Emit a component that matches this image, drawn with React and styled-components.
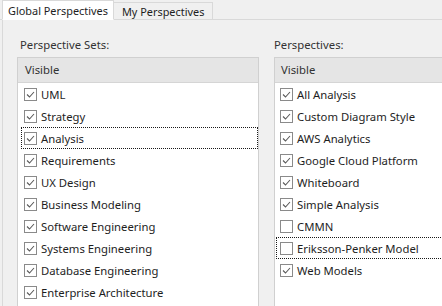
import React from "react";
import styled, { createGlobalStyle } from "styled-components";

const GlobalStyle = createGlobalStyle`
  html, body {
    margin: 0;
    padding: 0;
    background: #f0f0f0;
  }
  body {
    font-family: "Noto Sans", "Open Sans", sans-serif;
    font-size: 11.3px;
    color: #1e1e1e;
  }
`;

const Window = styled.div`
  width: 442px;
  height: 306px;
  overflow: hidden;
  display: flex;
  flex-direction: column;
  background: #f0f0f0;
`;

const TabStrip = styled.div`
  display: flex;
  align-items: flex-end;
  height: 20px;
  padding-left: 2px;
  border-bottom: 1px solid #d9d9d9;
  box-sizing: border-box;
`;

const Tab = styled.div`
  box-sizing: border-box;
  display: flex;
  align-items: center;
  white-space: nowrap;
  font-size: 10.9px;
  height: ${(p) => (p.$active ? "20px" : "17px")};
  background: ${(p) => (p.$active ? "#ffffff" : "#f0f0f0")};
  border: 1px solid #d9d9d9;
  border-bottom: ${(p) => (p.$active ? "1px solid #ffffff" : "none")};
  border-left: ${(p) => (p.$active ? "1px solid #d9d9d9" : "none")};
  margin-bottom: ${(p) => (p.$active ? "-1px" : "0")};
  padding: 0 ${(p) => (p.$active ? "5px" : "8px")} 0 ${(p) => (p.$active ? "5px" : "8px")};
`;

const Pane = styled.div`
  flex: 1;
  margin-left: 2px;
  border-left: 1px solid #d9d9d9;
  display: grid;
  grid-template-columns: 242px 242px;
  column-gap: 15px;
  padding: 17px 0 0 14px;
  min-height: 0;
`;

const Column = styled.div`
  display: flex;
  flex-direction: column;
  gap: 4px;
  min-height: 0;
`;

const Label = styled.div`
  height: 16px;
  line-height: 16px;
  padding-left: ${(p) => p.$indent ?? 3}px;
  color: #333;
`;

const ListBox = styled.div`
  flex: 1;
  background: #ffffff;
  border: 1px solid #d0d0d0;
  border-bottom: none;
`;

const Header = styled.div`
  height: 24px;
  line-height: 24px;
  background: #e5e5e5;
  border-bottom: 1px solid #d5d5d5;
  padding-left: ${(p) => p.$indent}px;
  color: #333;
`;

const Row = styled.div`
  box-sizing: border-box;
  display: flex;
  align-items: center;
  gap: 4px;
  height: 22px;
  margin-left: ${(p) => p.$inset}px;
  padding-left: ${(p) => p.$pad}px;
  border: 1px dotted ${(p) => (p.$focus ? "#1a1a1a" : "transparent")};
  white-space: nowrap;
`;

const Box = styled.span`
  box-sizing: border-box;
  width: 13px;
  height: 13px;
  border: 1px solid #8a8a8a;
  background: #fff;
  flex: none;
  display: flex;
  align-items: center;
  justify-content: center;
`;

const Check = ({ on }) => (
  <Box>
    {on && (
      <svg width="11" height="11" viewBox="0 0 11 11">
        <path d="M2 5.5 L4.5 8 L9 3" fill="none" stroke="#5a5a5a" strokeWidth="1.1" />
      </svg>
    )}
  </Box>
);

const sets = [
  "UML",
  "Strategy",
  "Analysis",
  "Requirements",
  "UX Design",
  "Business Modeling",
  "Software Engineering",
  "Systems Engineering",
  "Database Engineering",
  "Enterprise Architecture",
];

const perspectives = [
  ["All Analysis", true],
  ["Custom Diagram Style", true],
  ["AWS Analytics", true],
  ["Google Cloud Platform", true],
  ["Whiteboard", true],
  ["Simple Analysis", true],
  ["CMMN", false],
  ["Eriksson-Penker Model", false],
  ["Web Models", true],
];

export default function App() {
  return (
    <>
      <GlobalStyle />
      <Window>
        <TabStrip>
          <Tab $active>Global Perspectives</Tab>
          <Tab>My Perspectives</Tab>
        </TabStrip>
        <Pane>
          <Column>
            <Label>Perspective Sets:</Label>
            <ListBox>
              <Header $indent={7}>Visible</Header>
              {sets.map((s) => (
                <Row key={s} $inset={3} $pad={2} $focus={s === "Analysis"}>
                  <Check on />
                  {s}
                </Row>
              ))}
            </ListBox>
          </Column>
          <Column>
            <Label $indent={0}>Perspectives:</Label>
            <ListBox>
              <Header $indent={6}>Visible</Header>
              {perspectives.map(([s, on]) => (
                <Row key={s} $inset={1} $pad={3} $focus={s === "Eriksson-Penker Model"}>
                  <Check on={on} />
                  {s}
                </Row>
              ))}
            </ListBox>
          </Column>
        </Pane>
      </Window>
    </>
  );
}
